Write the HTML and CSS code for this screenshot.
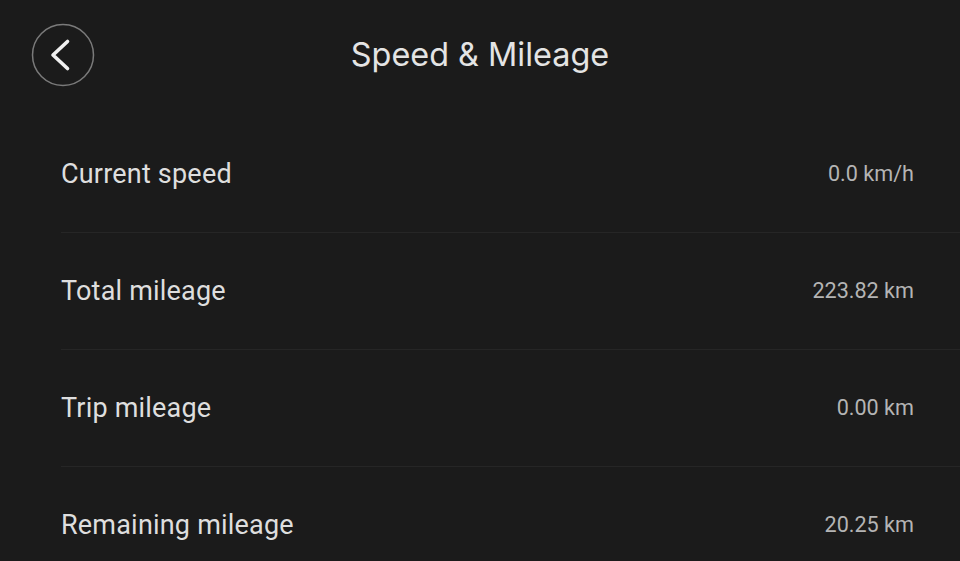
FILE: index.html
```html
<!DOCTYPE html>
<html lang="en">
<head>
<meta charset="utf-8">
<title>Speed &amp; Mileage</title>
<link rel="stylesheet" href="styles.css">
</head>
<body>
<div class="page">
  <header class="header">
    <button class="back" aria-label="Back">
      <svg width="64" height="64" viewBox="0 0 64 64">
        <circle cx="32" cy="32" r="30.5" fill="none" stroke="#7a7a7a" stroke-width="1.5"/>
        <path d="M36.5 18.5 L22 32 L36.5 45.5" fill="none" stroke="#f0f0f0" stroke-width="3.6" stroke-linecap="round" stroke-linejoin="round"/>
      </svg>
    </button>
    <h1 class="title">Speed &amp; Mileage</h1>
  </header>
  <ul class="list">
    <li class="row"><span class="label">Current speed</span><span class="value">0.0 km/h</span></li>
    <li class="row"><span class="label">Total mileage</span><span class="value">223.82 km</span></li>
    <li class="row"><span class="label">Trip mileage</span><span class="value">0.00 km</span></li>
    <li class="row"><span class="label">Remaining mileage</span><span class="value">20.25 km</span></li>
  </ul>
</div>
</body>
</html>
```
FILE: styles.css
```css
html, body {
  margin: 0;
  padding: 0;
  background: #1b1b1b;
  height: 100%;
  overflow: hidden;
}
.page {
  display: flex;
  flex-direction: column;
  width: 960px;
}
.header {
  position: relative;
  height: 116px;
  display: flex;
  justify-content: center;
}
.back {
  position: absolute;
  left: 31px;
  top: 23px;
  width: 64px;
  height: 64px;
  padding: 0;
  border: 0;
  background: transparent;
  cursor: pointer;
}
.back svg { display: block; }
.title {
  margin: 0;
  padding-top: 33px;
  font-family: Inter, "Noto Sans", sans-serif;
  font-weight: 400;
  font-size: 32.4px;
  line-height: 44px;
  color: #e4e4e4;
}
.list {
  list-style: none;
  margin: 0 0 0 61px;
  padding: 0;
}
.row {
  height: 115px;
  border-bottom: 1px solid #262626;
  display: flex;
  align-items: center;
  justify-content: space-between;
  padding-right: 46px;
  padding-bottom: 1px;
}
.label {
  font-family: Roboto, "Liberation Sans", sans-serif;
  font-size: 27px;
  color: #dedede;
  letter-spacing: 0.2px;
}
.value {
  font-family: Roboto, "Liberation Sans", sans-serif;
  font-size: 21.6px;
  color: #b4b4b4;
}
```
